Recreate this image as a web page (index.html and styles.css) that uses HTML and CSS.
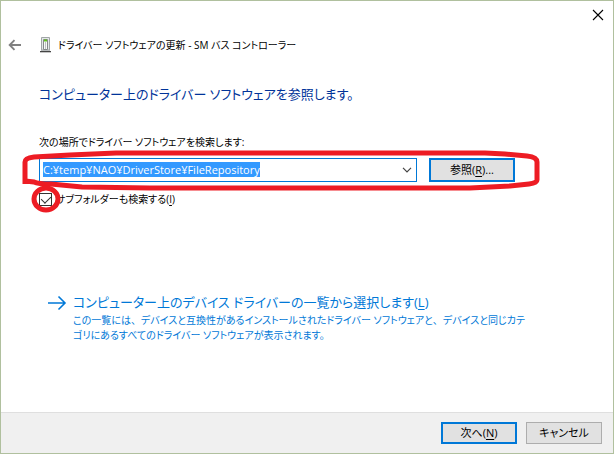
FILE: index.html
```html
<!DOCTYPE html>
<html lang="ja">
<head>
    <meta charset="UTF-8">
    <meta name="viewport" content="width=device-width, initial-scale=1.0">
    <title>ドライバー ソフトウェアの更新</title>
    <link rel="stylesheet" href="styles.css">
</head>
<body>
    <div class="window">
        <div class="titlebar">
            <button class="icon-btn close-btn" aria-label="閉じる">
                <svg width="12" height="12" viewBox="0 0 12 12"><path d="M1 1L11 11M11 1L1 11" fill="none" stroke="#000" stroke-width="1.1"/></svg>
            </button>
        </div>
        <header class="header">
            <button class="icon-btn" aria-label="戻る">
                <svg width="14" height="12" viewBox="0 0 14 12"><path d="M13 6H2M6.500 1.200L1.700 6L6.500 10.800" fill="none" stroke="#808080" stroke-width="1.900"/></svg>
            </button>
            <svg class="device-icon" width="12" height="16" viewBox="0 0 12 16">
                <path d="M1.500 .5H9.500V13H1.500Z" fill="#e4e8e8" stroke="#a0a5a7"/>
                <path d="M3.500 2.500H7.500V12.500H3.500Z" fill="#f8f8f8" stroke="#858989"/>
                <path d="M5.500 5V12" stroke="#bcc2c2"/>
                <path d="M4 2.500H7V4.500H4Z" fill="#62c120"/>
                <path d="M1 13H10V14H1Z" fill="#b7babb"/>
                <path d="M0 14H11V15.300H0Z" fill="#444"/>
            </svg>
            <span class="window-title">ドライバー ソフトウェアの更新 - SM バス コントローラー</span>
        </header>

        <main class="content">
            <h1>コンピューター上のドライバー ソフトウェアを参照します。</h1>

            <div class="search">
                <label class="path-label" for="path">次の場所でドライバー ソフトウェアを検索します:</label>
                <div class="path-row">
                    <div class="combo">
                        <input type="text" id="path" value="C:¥temp¥NAO¥DriverStore¥FileRepository" spellcheck="false">
                        <button class="icon-btn combo-btn" aria-label="一覧を表示">
                            <svg width="10" height="6" viewBox="0 0 10 6"><path d="M1 .8L5 4.800L9 .8" fill="none" stroke="#444" stroke-width="1.200"/></svg>
                        </button>
                    </div>
                    <button class="btn btn-default btn-browse">参照(<u>R</u>)...</button>
                </div>
                <label class="check-row">
                    <input type="checkbox" checked>
                    <span>サブフォルダーも検索する(<u>I</u>)</span>
                </label>
                <svg class="marks" width="520" height="68" viewBox="0 0 520 68">
                    <path d="M5 34V12Q5 8 14 7L50 5L96 3H465L485 4L507 6Q517 7 517 12V30Q517 33 509 34L490 36L450 38H130L62 37L31 34Q18 34 14 32L5 31"/>
                    <ellipse cx="26" cy="49" rx="12" ry="11"/>
                </svg>
            </div>

            <a class="command-link" href="#">
                <svg class="command-arrow" width="20" height="16" viewBox="0 0 20 16"><path d="M1 8H18M11.500 1.500L18 8L11.500 14.500" fill="none" stroke="#0078d7" stroke-width="1.600"/></svg>
                <span class="command-text">
                    <span class="command-title">コンピューター上のデバイス ドライバーの一覧から選択します(<u>L</u>)</span>
                    <span class="command-note">この一覧には<span class="comma">、</span>デバイスと互換性があるインストールされたドライバー ソフトウェアと<span class="comma">、</span>デバイスと同じカテ<br>ゴリにあるすべてのドライバー ソフトウェアが表示されます。</span>
                </span>
            </a>
        </main>

        <footer class="footer">
            <button class="btn btn-default">次へ(<u>N</u>)</button>
            <button class="btn">キャンセル</button>
        </footer>
    </div>
    <script>
        const path = document.getElementById("path");
        path.focus();
        path.select();
    </script>
</body>
</html>
```

FILE: styles.css
```css
* {
    box-sizing: border-box;
}
body {
    margin: 0;
    font-family: "Open Sans", "Noto Sans CJK JP", sans-serif;
    font-size: 11px;
    line-height: 16px;
    font-feature-settings: "palt";
    color: #000;
}
button, input {
    font: inherit;
    font-feature-settings: inherit;
    color: inherit;
}
u {
    text-underline-offset: 2px;
}
.window {
    display: flex;
    flex-direction: column;
    min-height: 100vh;
    border: 1px solid #b0c09e;
    background: #fff;
}
.titlebar {
    display: flex;
    justify-content: flex-end;
    padding: 8px 9px 0;
}
.icon-btn {
    display: flex;
    align-items: center;
    justify-content: center;
    padding: 0;
    border: none;
    background: none;
}
.close-btn {
    width: 12px;
    height: 12px;
}
.header {
    display: flex;
    align-items: center;
    padding: 16px 8px 0 7px;
}
.device-icon {
    margin: 0 6px 0 18px;
}
.window-title {
    font-size: 10px;
}
.content {
    flex: 1;
    padding: 29px 38px 0;
}
h1 {
    margin: 0;
    font-size: 13px;
    font-weight: normal;
    line-height: 24px;
    color: #003399;
}
.search {
    position: relative;
    margin-top: 28px;
}
.path-label {
    display: block;
    font-size: 10px;
}
.path-row {
    display: flex;
    align-items: center;
    gap: 12px;
    margin-top: 8px;
    padding-right: 60px;
}
.combo {
    display: flex;
    flex: 1;
    height: 24px;
    border: 1px solid #0078d7;
}
.combo input {
    flex: 1;
    min-width: 0;
    height: 20px;
    padding: 0 3px;
    border: none;
    outline: none;
    background: none;
}
.combo input::selection {
    background: #3399ff;
    color: #fff;
}
.combo-btn {
    width: 18px;
}
.btn {
    min-width: 76px;
    height: 22px;
    padding: 0;
    border: 1px solid #adadad;
    background: #e1e1e1;
    font-size: 11px;
}
.btn-default {
    border: 2px solid #0078d7;
}
.btn-browse {
    width: 86px;
    height: 24px;
}
.check-row {
    display: flex;
    align-items: center;
    gap: 4px;
    margin-top: 9px;
    font-size: 10px;
}
.check-row input {
    appearance: none;
    width: 13px;
    height: 13px;
    margin: 0;
    border: 1px solid #333;
    background: #fff;
}
.check-row input:checked::after {
    content: "";
    display: block;
    width: 5px;
    height: 8px;
    margin: 0 auto;
    border: solid #333;
    border-width: 0 1px 1px 0;
    transform: rotate(45deg);
}
.marks {
    position: absolute;
    top: 16px;
    left: -19px;
    pointer-events: none;
    fill: none;
    stroke: #ed1c24;
    stroke-width: 5;
}
.command-link {
    display: flex;
    gap: 6px;
    margin-top: 85px;
    padding-left: 8px;
    color: #0078d7;
    text-decoration: none;
}
.command-arrow {
    flex: none;
    margin-top: 3px;
}
.command-title {
    display: block;
    font-size: 13px;
    line-height: 21px;
}
.command-note {
    display: block;
    font-size: 10px;
    line-height: 15px;
    white-space: nowrap;
}
.comma {
    font-feature-settings: normal;
}
.footer {
    display: flex;
    justify-content: flex-end;
    gap: 9px;
    padding: 9px 11px;
    border-top: 1px solid #dfdfdf;
    background: #f0f0f0;
}
```
